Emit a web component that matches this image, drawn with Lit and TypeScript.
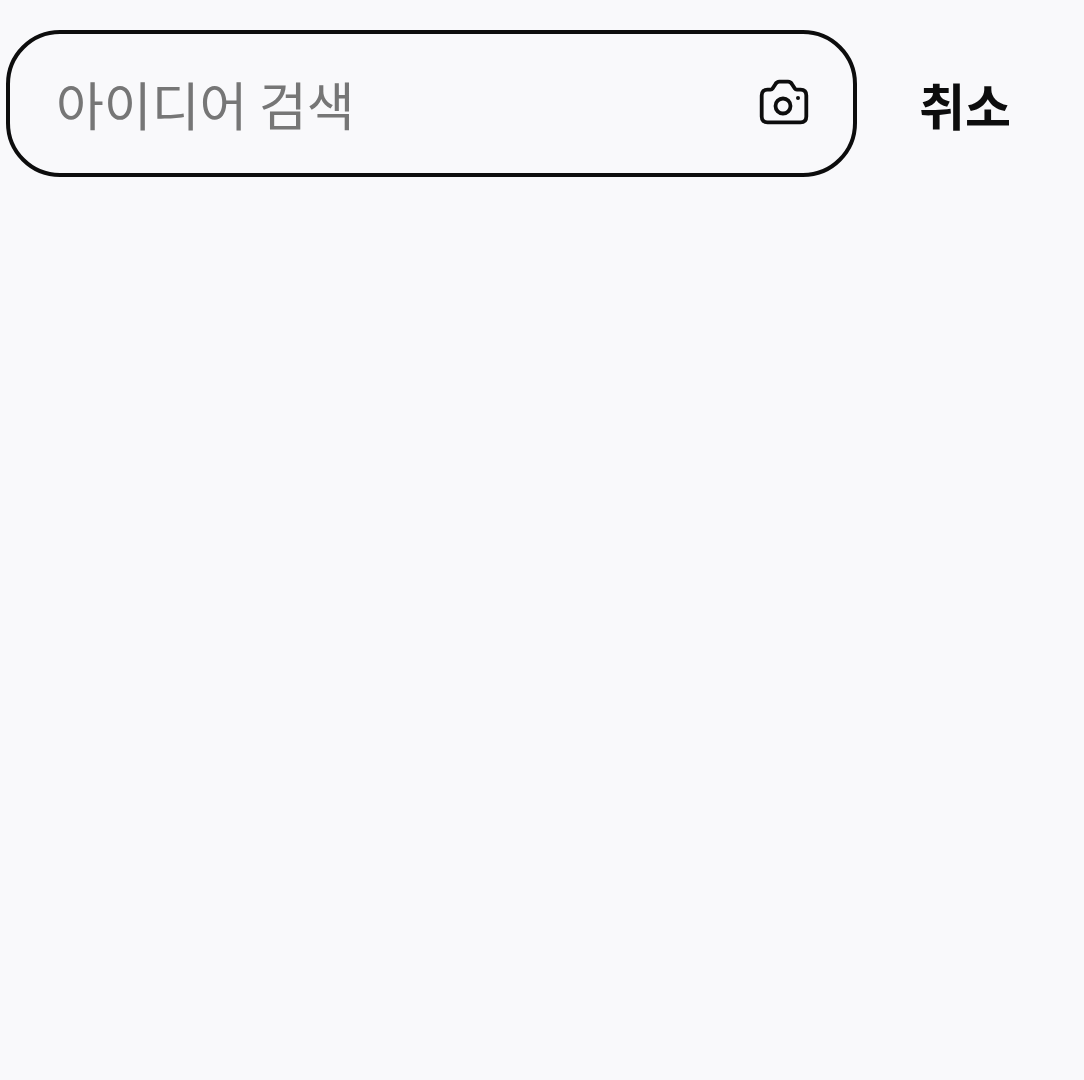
import { LitElement, html, css } from 'lit';
import { customElement } from 'lit/decorators.js';

@customElement('app-root')
export class AppRoot extends LitElement {
  static styles = css`
    :host {
      display: block;
      min-height: 1080px;
      background: #f9f9fb;
      font-family: "Noto Sans CJK KR", "Noto Sans", sans-serif;
    }
    .bar {
      display: flex;
      align-items: center;
      padding: 30px 0 0 6px;
    }
    .search {
      box-sizing: border-box;
      width: 851px;
      height: 147px;
      flex: none;
      display: flex;
      align-items: center;
      justify-content: space-between;
      padding: 0 43px 0 46px;
      border: 4px solid #0d0d0d;
      border-radius: 54px;
    }
    .placeholder {
      font-size: 52px;
      line-height: 1;
      font-weight: 400;
      color: #767676;
    }
    .camera {
      display: block;
      width: 52px;
      height: 52px;
      margin-top: 1px;
    }
    .cancel {
      margin-left: 62px;
      font-size: 50px;
      line-height: 1;
      font-weight: 700;
      color: #0d0d0d;
    }
  `;

  render() {
    return html`
      <div class="bar">
        <div class="search">
          <span class="placeholder">아이디어 검색</span>
          <svg class="camera" viewBox="0 0 52 52" fill="none" stroke="#0d0d0d" stroke-width="3.8">
            <path
              d="M9.500 11.700h3c1 0 1.600-.4 2.100-1.200l2.600-4c1-1.800 2.200-2.800 4.200-2.800h8.600c2 0 3.200 1 4.200 2.800l2.600 4c.5.8 1.100 1.200 2.100 1.200h3.600c3.700 0 5.800 2 5.800 5.800v21c0 3.800-2.100 5.800-5.800 5.800H9.500c-3.700 0-5.800-2-5.800-5.800v-21c0-3.800 2.100-5.800 5.800-5.800Z"
              stroke-linejoin="round"
            />
            <circle cx="25" cy="28" r="7.500" />
            <circle cx="40" cy="20" r="2" fill="#0d0d0d" stroke="none" />
          </svg>
        </div>
        <span class="cancel">취소</span>
      </div>
    `;
  }
}
